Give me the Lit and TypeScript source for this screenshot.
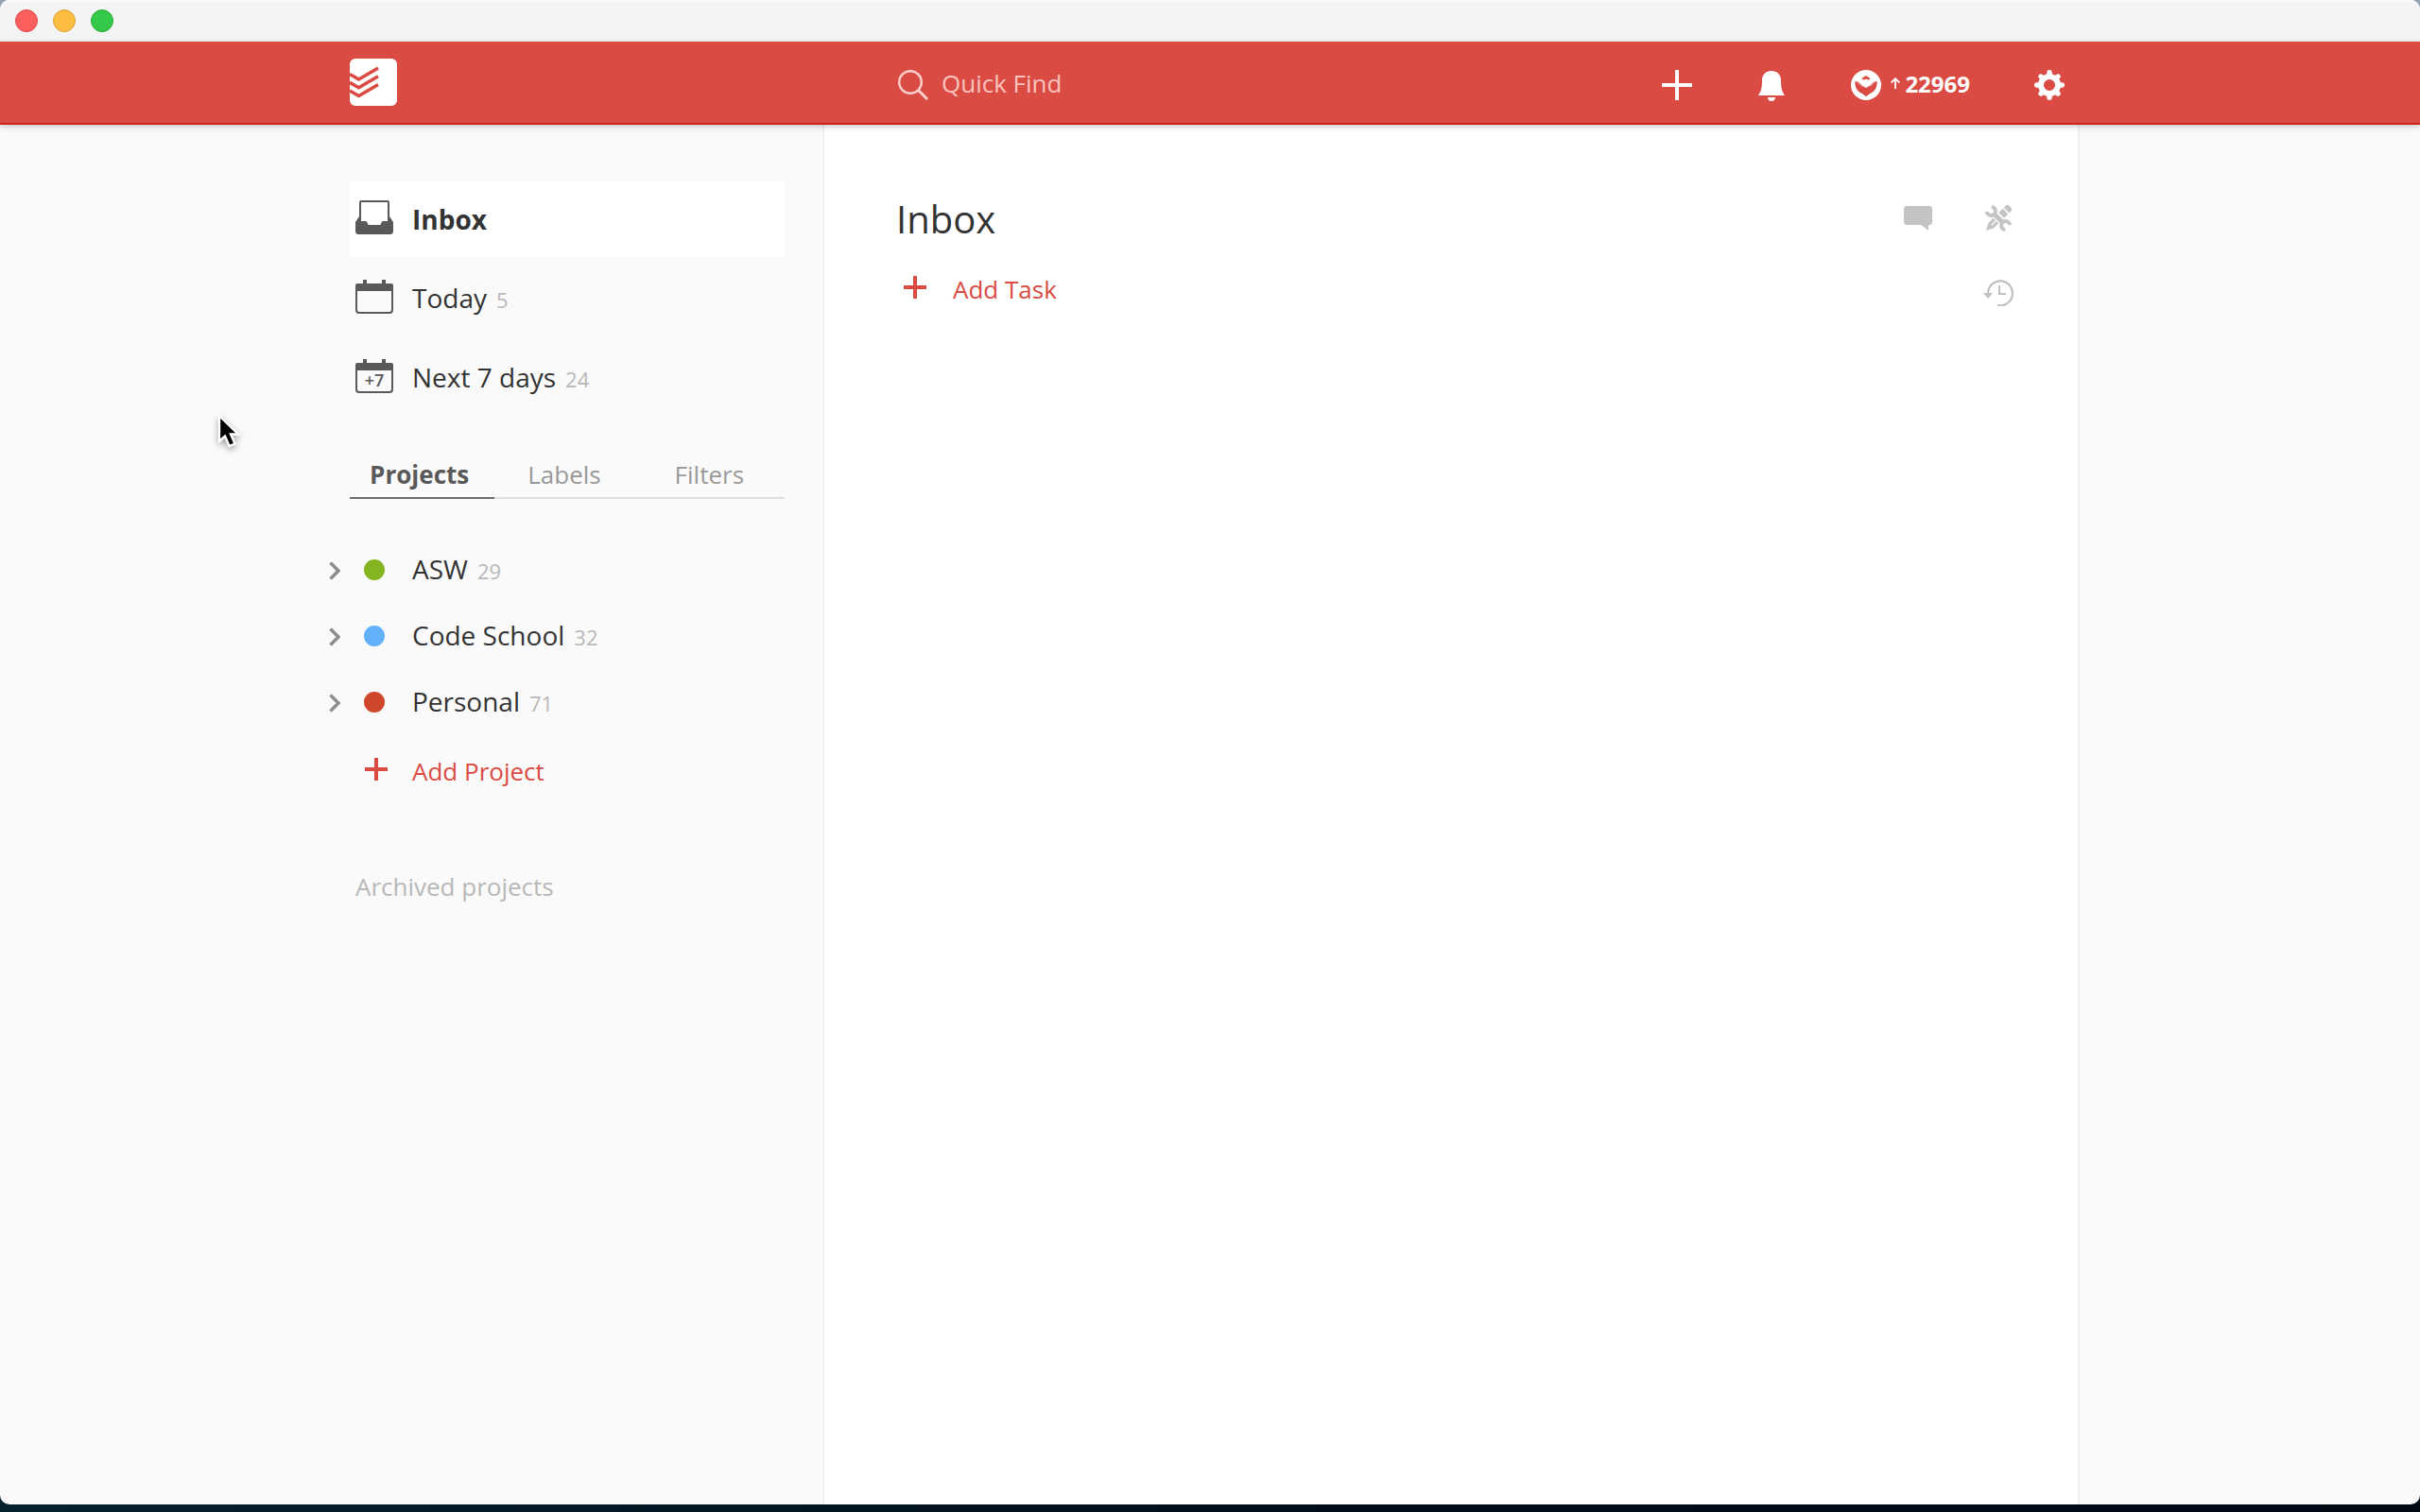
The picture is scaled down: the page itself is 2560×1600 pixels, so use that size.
import { LitElement, html, css, svg, nothing } from "lit";
import { customElement, state } from "lit/decorators.js";
import { classMap } from "lit/directives/class-map.js";
import { styleMap } from "lit/directives/style-map.js";

const icons = {
  logo: svg`<rect width="50" height="50" rx="6" fill="#fff"/>
    <g fill="none" stroke="#d94b43" stroke-width="3.6" stroke-linejoin="round">
      <path d="M0 16.500 9.500 22 30 10"/><path d="M0 25.300 9.500 30.800 30 18.800"/><path d="M0 34 9.500 39.500 30 27.500"/>
    </g>`,
  search: svg`<g fill="none" stroke="#fbd0cb" stroke-width="2.400"><circle cx="13" cy="13" r="11.800"/><path d="M21.300 21.300 31 31" stroke-width="3"/></g>`,
  plusLarge: svg`<path d="M14 0h4v14h14v4H18v14h-4V18H0v-4h14z"/>`,
  bell: svg`<path d="M16 2c6 0 10 4 10 10 0 7 .8 11.500 4 16H2c3.200-4.500 4-9 4-16C6 6 10 2 16 2zM12 30h8c0 2.600-1.600 4-4 4s-4-1.400-4-4z"/>`,
  karma: svg`<circle cx="16" cy="16" r="16" fill="#fff"/>
    <path fill="#d94b43" d="M16 6l4.600 2.900-2 1.900L16 9.600l-2.600 1.200-2-1.900z"/>
    <path fill="#d94b43" d="M4.300 12 8 12.800 13.500 17.600 16 19l2.500-1.400L24 12.800l3.700-.8C27.700 16 27 19.500 24.600 22 22 24.600 18.600 25.500 16 28.300 13.400 25.500 10 24.600 7.400 22 5 19.500 4.300 16 4.300 12z"/>
    <path fill="none" stroke="#fff" stroke-width=".6" d="M7 12.500l3.500 4M9.500 13l3 5M25 12.500l-3.500 4M22.500 13l-3 5"/>`,
  arrowUp: svg`<path d="M5 12V1.500M.7 5.500 5 1.200l4.300 4.300" fill="none" stroke="#fff" stroke-width="1.800"/>`,
  gear: svg`<circle cx="16" cy="16" r="9" fill="none" stroke="#fff" stroke-width="6"/>
    <g stroke="#fff" stroke-width="5.400" stroke-linecap="round">
      <path d="M16 6V2.700M16 26v3.300M6 16H2.700M26 16h3.300M9 9 7 7M23 23l2 2M9 23l-2 2M23 9l2-2"/>
    </g>`,
  inbox: svg`<path fill-rule="evenodd" d="M6 0h28a2 2 0 0 1 2 2v15l4 6v9.500a3.500 3.500 0 0 1-3.500 3.500h-33A3.500 3.500 0 0 1 0 32.500V23l4-6V2a2 2 0 0 1 2-2zm0 2v20h4.500a2 2 0 0 1 1.900 1.300L13.500 26h13l1.100-2.700a2 2 0 0 1 1.900-1.300H34V2z"/>`,
  calendar: svg`<path fill-rule="evenodd" d="M8 0h4v4h16V0h4v4h6a2 2 0 0 1 2 2v26a4 4 0 0 1-4 4H4a4 4 0 0 1-4-4V6a2 2 0 0 1 2-2h6zM2 12v20a2 2 0 0 0 2 2h32a2 2 0 0 0 2-2V12z"/>`,
  plusSmall: svg`<path d="M10 0h4v10h10v4H14v10h-4V14H0v-4h10z"/>`,
  chevron: svg`<path d="M1.500 1.500 10 10l-8.500 8.500" fill="none" stroke="#8c8c8c" stroke-width="3.400"/>`,
  comment: svg`<path d="M3 0h24a3 3 0 0 1 3 3v14a3 3 0 0 1-3 3h-1v6l-8-6H3a3 3 0 0 1-3-3V3a3 3 0 0 1 3-3z"/>`,
  tools: svg`<path transform="rotate(45 14 14)" d="M10-3.500h8v5.500h-8zM10 3.500h8v6h-8zM10 17h3.300v7h1.400v-7H18v8L14 32.500 10 25z"/>
    <path d="M8 8l12 12" stroke="#fff" stroke-width="7.400"/>
    <g fill="none" stroke="currentColor">
      <path d="M8.500 8.500l11 11" stroke-width="5"/>
      <path d="M1.800 6.800A4.600 4.600 0 1 0 6.800 1.800M26.200 21.200A4.600 4.600 0 1 0 21.200 26.200" stroke-width="3.800"/>
    </g>`,
  history: svg`<path d="M5 14a13 13 0 1 1 10 13" fill="none" stroke="#c0c0c0" stroke-width="2.200"/>
    <path d="M0 14h10l-5 6z"/><path d="M17 6v9h7" fill="none" stroke="#c0c0c0" stroke-width="2"/>`,
  cursor: svg`<path d="M2 2v27l6-5.500 4.500 10.500 6-2.500L14 21.500h8z" fill="#000" stroke="#fff" stroke-width="2.400"/>`,
};

const icon = (name: keyof typeof icons, width: number, height: number) => html`<svg
  class="icon" width=${width} height=${height} viewBox="0 0 ${width} ${height}" fill="currentColor" aria-hidden="true"
>${icons[name]}</svg>`;

@customElement("app-titlebar")
export class AppTitlebar extends LitElement {
  static styles = css`
    :host { display: flex; align-items: center; gap: 16px; box-sizing: border-box; height: 44px; padding: 0 16px 2px; background: #f4f4f4; border-top: 2px solid #fafafa; }
    .light { width: 24px; height: 24px; padding: 0; border-radius: 50%; border: 1px solid; }
    .close { background: #fc605c; border-color: #df4744; }
    .minimize { background: #fdbd41; border-color: #dd9f34; }
    .zoom { background: #35c94a; border-color: #28a93a; }
  `;
  render() {
    return html`
      <button class="light close" aria-label="Close"></button>
      <button class="light minimize" aria-label="Minimize"></button>
      <button class="light zoom" aria-label="Zoom"></button>
    `;
  }
}

@customElement("app-header")
export class AppHeader extends LitElement {
  static styles = css`
    :host { display: block; background: #d94b43; border-bottom: 2px solid #cc2114; box-shadow: 0 2px 6px rgba(0, 0, 0, 0.22); position: relative; color: #fff; }
    .inner { box-sizing: border-box; max-width: 1840px; height: 86px; margin: 0 auto; padding: 0 16px 0 10px; display: grid; grid-template-columns: 580px 1fr auto; align-items: center; }
    .icon { display: block; flex: none; }
    .search { display: flex; align-items: center; gap: 14px; padding-top: 6px; }
    .field { flex: 1; min-width: 0; height: 40px; padding: 0 0 4px; border: 0; outline: 0; background: none; color: #fff; font: 26px/36px "Open Sans", "Noto Sans", sans-serif; }
    .field::placeholder { color: #fbc3bd; opacity: 1; }
    .actions { display: flex; align-items: center; gap: 68px; padding-top: 6px; }
    .action { display: flex; align-items: center; padding: 0; border: 0; background: none; color: inherit; font: 700 24px/32px "Open Sans", "Noto Sans", sans-serif; }
    .karma { gap: 10px; }
    .score { display: flex; align-items: center; gap: 5px; padding-bottom: 2px; }
  `;
  render() {
    return html`
      <div class="inner">
        <a class="home" href="#" aria-label="Home">${icon("logo", 50, 50)}</a>
        <label class="search">
          ${icon("search", 32, 32)}
          <input class="field" type="text" placeholder="Quick Find" aria-label="Quick Find" />
        </label>
        <div class="actions">
          <button class="action" aria-label="Quick add">${icon("plusLarge", 32, 32)}</button>
          <button class="action" aria-label="Notifications">${icon("bell", 32, 34)}</button>
          <button class="action karma">
            ${icon("karma", 32, 32)}
            <span class="score">${icon("arrowUp", 10, 14)}22969</span>
          </button>
          <button class="action" aria-label="Settings">${icon("gear", 32, 32)}</button>
        </div>
      </div>
    `;
  }
}

interface View { name: string; icon: "inbox" | "calendar"; badge?: string; count?: number; }
interface Project { name: string; color: string; count: number; }

const views: View[] = [
  { name: "Inbox", icon: "inbox" },
  { name: "Today", icon: "calendar", count: 5 },
  { name: "Next 7 days", icon: "calendar", badge: "+7", count: 24 },
];
const tabs = ["Projects", "Labels", "Filters"];
const projects: Project[] = [
  { name: "ASW", color: "#85b421", count: 29 },
  { name: "Code School", color: "#63b0fb", count: 32 },
  { name: "Personal", color: "#cf462b", count: 71 },
];

@customElement("app-sidebar")
export class AppSidebar extends LitElement {
  @state() private view = "Inbox";
  @state() private tab = "Projects";

  static styles = css`
    :host { display: block; padding: 60px 40px 0 10px; font: 28px/40px "Open Sans", "Noto Sans", sans-serif; color: #333; }
    .icon { display: block; flex: none; }
    button { padding: 0; border: 0; background: none; color: inherit; font: inherit; text-align: left; }
    .views { display: flex; flex-direction: column; gap: 4px; }
    .view { display: flex; align-items: center; height: 80px; padding: 0 6px; border-radius: 4px; text-decoration: none; color: inherit; }
    .view.selected { background: #fff; font-weight: 700; }
    .glyph { display: grid; width: 40px; margin: 0 20px 4px 0; color: #595959; }
    .glyph > * { grid-area: 1 / 1; }
    .badge { font-size: 18px; line-height: 20px; font-weight: 600; text-align: center; padding-top: 12px; }
    .text { display: flex; align-items: baseline; gap: 10px; }
    .count { font-size: 22px; color: #b8b8b8; }
    .tabs { display: grid; grid-template-columns: repeat(3, 1fr); margin-top: 32px; font-size: 26px; }
    .tab { height: 56px; padding: 6px 6px 0 0; color: #999; text-align: center; border-bottom: 2px solid #dedede; }
    .tab.selected { color: #595959; font-weight: 700; border-color: #6e6e6e; }
    .projects { list-style: none; margin: 40px 0 0 -22px; padding: 0; }
    .project { display: flex; align-items: center; height: 70px; }
    .toggle { margin-top: 2px; }
    .dot { flex: none; width: 22px; height: 22px; border-radius: 50%; margin: 0 29px 0 25px; }
    .link { color: inherit; text-decoration: none; }
    .add { display: flex; align-items: center; gap: 26px; height: 72px; margin-left: 16px; font-size: 26px; color: #d94b43; }
    .label { padding-top: 4px; }
    .archived { display: block; margin: 68px 0 0 6px; font-size: 26px; color: #b8b8b8; }
  `;
  render() {
    return html`
      <nav class="views">
        ${views.map((v) => html`
          <a class=${classMap({ view: true, selected: v.name === this.view })} href="#" @click=${() => (this.view = v.name)}>
            <span class="glyph">${icon(v.icon, 40, 36)}${v.badge ? html`<span class="badge">${v.badge}</span>` : nothing}</span>
            <span class="text">${v.name}${v.count ? html`<span class="count">${v.count}</span>` : nothing}</span>
          </a>`)}
      </nav>
      <div class="tabs" role="tablist">
        ${tabs.map((t) => html`
          <button class=${classMap({ tab: true, selected: t === this.tab })} role="tab" aria-selected=${t === this.tab} @click=${() => (this.tab = t)}>${t}</button>`)}
      </div>
      <ul class="projects">
        ${projects.map((p) => html`
          <li class="project">
            <button class="toggle" aria-label="Expand ${p.name}">${icon("chevron", 12, 20)}</button>
            <span class="dot" style=${styleMap({ background: p.color })}></span>
            <span class="text"><a class="link" href="#">${p.name}</a><span class="count">${p.count}</span></span>
          </li>`)}
      </ul>
      <button class="add">${icon("plusSmall", 24, 24)}<span class="label">Add Project</span></button>
      <button class="archived">Archived projects</button>
    `;
  }
}

@customElement("app-task-list")
export class AppTaskList extends LitElement {
  static styles = css`
    :host { display: block; padding: 72px 68px 0 76px; background: #fff; border: solid #f0f0f0; border-width: 0 2px; color: #333; font: 26px/36px "Open Sans", "Noto Sans", sans-serif; }
    .icon { display: block; flex: none; }
    button { padding: 0; border: 0; background: none; color: inherit; font: inherit; }
    .bar { display: flex; align-items: center; justify-content: space-between; }
    .title { margin: 0; font-size: 40px; line-height: 56px; font-weight: 400; }
    .tools { display: flex; align-items: center; gap: 56px; padding: 0 2px 2px 0; color: #c3c4c3; }
    .row { display: flex; align-items: center; justify-content: space-between; height: 88px; color: #c0c0c0; }
    .add { display: flex; align-items: center; gap: 28px; padding-left: 8px; color: #d94b43; }
    .label { padding-top: 4px; }
    .history { padding-top: 12px; }
  `;
  render() {
    return html`
      <div class="bar">
        <h1 class="title">Inbox</h1>
        <div class="tools">
          <button aria-label="Comments">${icon("comment", 30, 26)}</button>
          <button aria-label="Project actions">${icon("tools", 28, 28)}</button>
        </div>
      </div>
      <div class="row">
        <button class="add">${icon("plusSmall", 24, 24)}<span class="label">Add Task</span></button>
        <button class="history" aria-label="History">${icon("history", 32, 28)}</button>
      </div>
    `;
  }
}

@customElement("app-root")
export class AppRoot extends LitElement {
  static styles = css`
    :host { display: flex; flex-direction: column; box-sizing: border-box; min-height: 100vh; padding-bottom: 8px; background: linear-gradient(to bottom, #94a1b2 20px, transparent 20px), linear-gradient(to right, #06202d, #000c18 60%, #000814); }
    .window { flex: 1; display: flex; flex-direction: column; overflow: hidden; border-radius: 10px; background: #fafafa; }
    .body { flex: 1; box-sizing: border-box; width: 100%; max-width: 1840px; margin: 0 auto; display: grid; grid-template-columns: 510px 1fr; }
    .pointer { position: absolute; left: 230px; top: 438px; filter: drop-shadow(0 3px 3px rgba(0, 0, 0, 0.35)); }
  `;
  render() {
    return html`
      <div class="window">
        <app-titlebar></app-titlebar>
        <app-header></app-header>
        <div class="body">
          <app-sidebar></app-sidebar>
          <app-task-list></app-task-list>
        </div>
      </div>
      <div class="pointer">${icon("cursor", 26, 38)}</div>
    `;
  }
}
